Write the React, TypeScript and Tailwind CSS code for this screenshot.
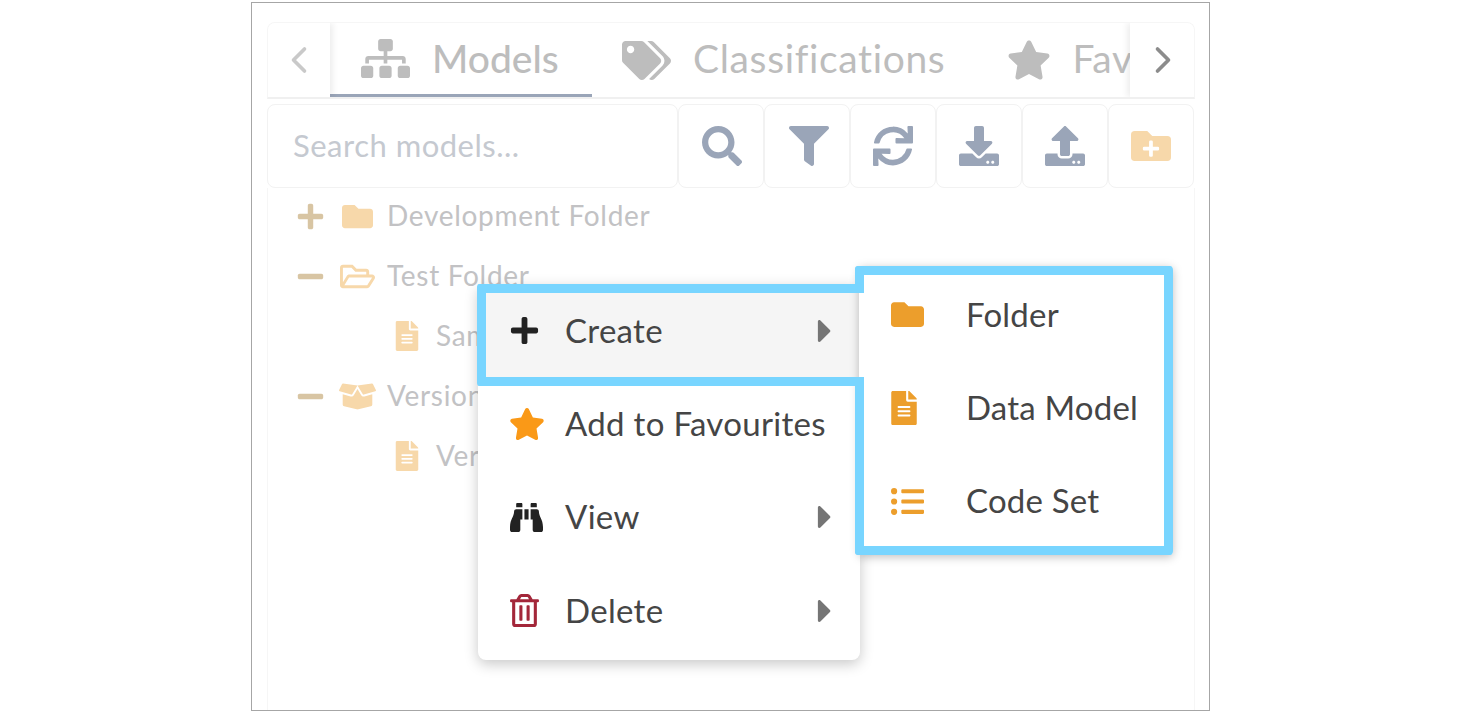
import React from "react";
import {
  FaSitemap, FaTags, FaStar, FaSearch, FaFilter, FaSync, FaDownload, FaUpload,
  FaFolderPlus, FaPlus, FaMinus, FaFolder, FaRegFolderOpen, FaFileAlt, FaBoxOpen, FaBinoculars, FaRegTrashAlt,
  FaListUl, FaCaretRight,
} from "react-icons/fa";
import { ChevronLeft, ChevronRight } from "lucide-react";

const toolbar = [
  { I: FaSearch, c: "text-[#9aa5b8] ml-[1px]" },
  { I: FaFilter, c: "text-[#9aa5b8] ml-[3px]" },
  { I: FaSync, c: "text-[#9aa5b8]" },
  { I: FaDownload, c: "text-[#9aa5b8]" },
  { I: FaUpload, c: "text-[#9aa5b8]" },
  { I: FaFolderPlus, c: "text-[#f7d8aa]" },
];

function TreeRow({ sign, icon, label, child }: { sign?: "plus" | "minus"; icon: React.ReactNode; label: string; child?: boolean }) {
  return (
    <div className={`flex h-[50px] items-center ${child ? "pl-[127px]" : "pl-[28px]"}`}>
      {sign === "plus" && <FaPlus size={29} className="mr-[16px] shrink-0 text-[#d8c5a3]" />}
      {sign === "minus" && <FaMinus size={29} className="mr-[16px] shrink-0 text-[#d8c5a3]" />}
      <span className={`flex shrink-0 items-center justify-center ${child ? "w-[23px] mr-[18px]" : "w-[32px] mr-[14px]"} text-[#f7d8aa]`}>{icon}</span>
      <span className="-mt-[2px] whitespace-nowrap text-[28px] leading-none tracking-[0.7px] text-[#c2c2c4]">{label}</span>
    </div>
  );
}

function MenuRow({ icon, label, caret, active }: { icon: React.ReactNode; label: string; caret?: boolean; active?: boolean }) {
  return (
    <div className={`flex h-[93.3px] items-center pl-[32px] pr-[18px] ${active ? "bg-[#f5f5f5]" : ""}`}>
      <span className="flex w-[55px] shrink-0 items-center">{icon}</span>
      <span className="-mt-[1px] whitespace-nowrap text-[33px] leading-none tracking-[0.3px] text-[#454545]">{label}</span>
      {caret && <FaCaretRight size={38} className="ml-auto shrink-0 text-[#757575] -mr-[2px]" />}
    </div>
  );
}

function SubRow({ icon, label }: { icon: React.ReactNode; label: string }) {
  return (
    <div className="flex h-[93.3px] items-center pl-[32px]">
      <span className="flex w-[76px] shrink-0 items-center text-[#ec9e2c]">{icon}</span>
      <span className="-mt-[1px] -ml-[1px] whitespace-nowrap text-[33px] leading-none tracking-[0.2px] text-[#454545]">{label}</span>
    </div>
  );
}

export default function App() {
  return (
    <div className="h-[712px] w-[1460px] overflow-hidden bg-white pt-[2px] pl-[251px] font-['Lato','Noto_Sans',sans-serif]">
      <div className="relative h-[709px] w-[959px] border border-[#a6a6a6] bg-white px-[15px] pt-[19px]">
        <div className="w-[928px]">
          {/* tabs */}
          <div className="flex h-[77px] overflow-hidden rounded-t-[8px] border-x border-t border-[#f6f6f6] border-b-2 border-b-[#f0f0f0]">
            <div className="relative z-10 flex w-[62px] shrink-0 items-center justify-center bg-white shadow-[3px_0_6px_rgba(0,0,0,0.07)]">
              <ChevronLeft size={44} strokeWidth={2} className="text-[#c9c9c9]" />
            </div>
            <div className="flex min-w-0 flex-1 overflow-hidden">
              <div className="flex h-[75px] w-[262px] shrink-0 items-center gap-[22px] border-b-[4px] border-[#9aa5b8] pl-[31px]">
                <FaSitemap size={49} className="shrink-0 text-[#bdbdbd]" />
                <span className="text-[39px] font-medium leading-none text-[#bdbdbd]">Models</span>
              </div>
              <div className="flex h-[75px] shrink-0 items-center gap-[22px] pl-[30px]">
                <FaTags size={49} className="shrink-0 text-[#bdbdbd]" />
                <span className="-mt-[4px] text-[39px] leading-none tracking-[0.65px] text-[#bdbdbd]">Classifications</span>
              </div>
              <div className="flex h-[75px] shrink-0 items-center gap-[21px] pl-[62px]">
                <FaStar size={44} className="-mt-[2px] shrink-0 text-[#bdbdbd]" />
                <span className="-mt-[4px] text-[39px] leading-none tracking-[0.65px] text-[#bdbdbd]">Favourites</span>
              </div>
            </div>
            <div className="relative z-10 flex w-[64px] shrink-0 items-center justify-center bg-white pl-[1px] shadow-[-3px_0_6px_rgba(0,0,0,0.07)]">
              <ChevronRight size={44} strokeWidth={2} className="text-[#8c8c8c]" />
            </div>
          </div>
          {/* toolbar */}
          <div className="mt-[5px] flex h-[84px]">
            <div className="flex w-[411px] items-center rounded-[8px] border border-[#f2f2f2] pl-[25px] pb-[2px] text-[31px] tracking-[0.5px] text-[#c5c9d0]">
              Search models...
            </div>
            {toolbar.map(({ I, c }, i) => (
              <div key={i} className="flex w-[86px] items-center justify-center rounded-[8px] border border-[#f2f2f2]">
                <I size={40} className={c} />
              </div>
            ))}
          </div>
          {/* tree */}
          <div className="flex h-[522px] flex-col gap-[10px] border-x border-[#f6f6f6] pt-[3px]">
            <TreeRow sign="plus" icon={<FaFolder size={31} className="shrink-0" />} label="Development Folder" />
            <TreeRow sign="minus" icon={<FaRegFolderOpen size={35} className="shrink-0" />} label="Test Folder" />
            <TreeRow child icon={<FaFileAlt size={30} className="shrink-0" />} label="Sample Model" />
            <TreeRow sign="minus" icon={<FaBoxOpen size={37} className="shrink-0" />} label="Versioned Folder" />
            <TreeRow child icon={<FaFileAlt size={30} className="shrink-0" />} label="Version Model" />
          </div>
        </div>

        {/* context menu */}
        <div className="absolute left-[226px] top-[281px] z-20 h-[376px] w-[382px] overflow-hidden rounded-[8px] bg-white shadow-[0_4px_14px_rgba(0,0,0,0.22)]">
          <MenuRow active icon={<FaPlus size={31} className="-ml-[1px] text-[#222]" />} label="Create" caret />
          <MenuRow icon={<FaStar size={36} className="-ml-[1px] text-[#fa9917]" />} label="Add to Favourites" />
          <MenuRow icon={<FaBinoculars size={33} className="text-[#222]" />} label="View" caret />
          <MenuRow icon={<FaRegTrashAlt size={33} className="-ml-[2px] text-[#a3273a]" />} label="Delete" caret />
        </div>

        {/* submenu */}
        <div className="absolute left-[607px] top-[263px] z-30 h-[289px] w-[314px] rounded-[4px] bg-white pt-[2px] shadow-[0_2px_10px_rgba(0,0,0,0.25)]">
          <SubRow icon={<FaFolder size={33} />} label="Folder" />
          <SubRow icon={<FaFileAlt size={34} className="-ml-[4px]" />} label="Data Model" />
          <SubRow icon={<FaListUl size={33} />} label="Code Set" />
          {/* callout outline */}
          <div className="pointer-events-none absolute -left-[4px] top-0 bottom-0 right-0 rounded-[4px] border-y-[9px] border-r-[9px] border-[#78d5ff]" />
          <div className="pointer-events-none absolute -left-[4px] top-0 h-[26px] w-[9px] rounded-[3px] bg-[#78d5ff]" />
          <div className="pointer-events-none absolute -left-[4px] top-[111px] bottom-0 w-[9px] rounded-[3px] bg-[#78d5ff]" />
        </div>
        {/* highlight on Create */}
        <div className="pointer-events-none absolute left-[225px] top-[281px] z-40 h-[102px] w-[387px] rounded-[3px] border-y-[9px] border-l-[9px] border-[#78d5ff]" />
      </div>
    </div>
  );
}
